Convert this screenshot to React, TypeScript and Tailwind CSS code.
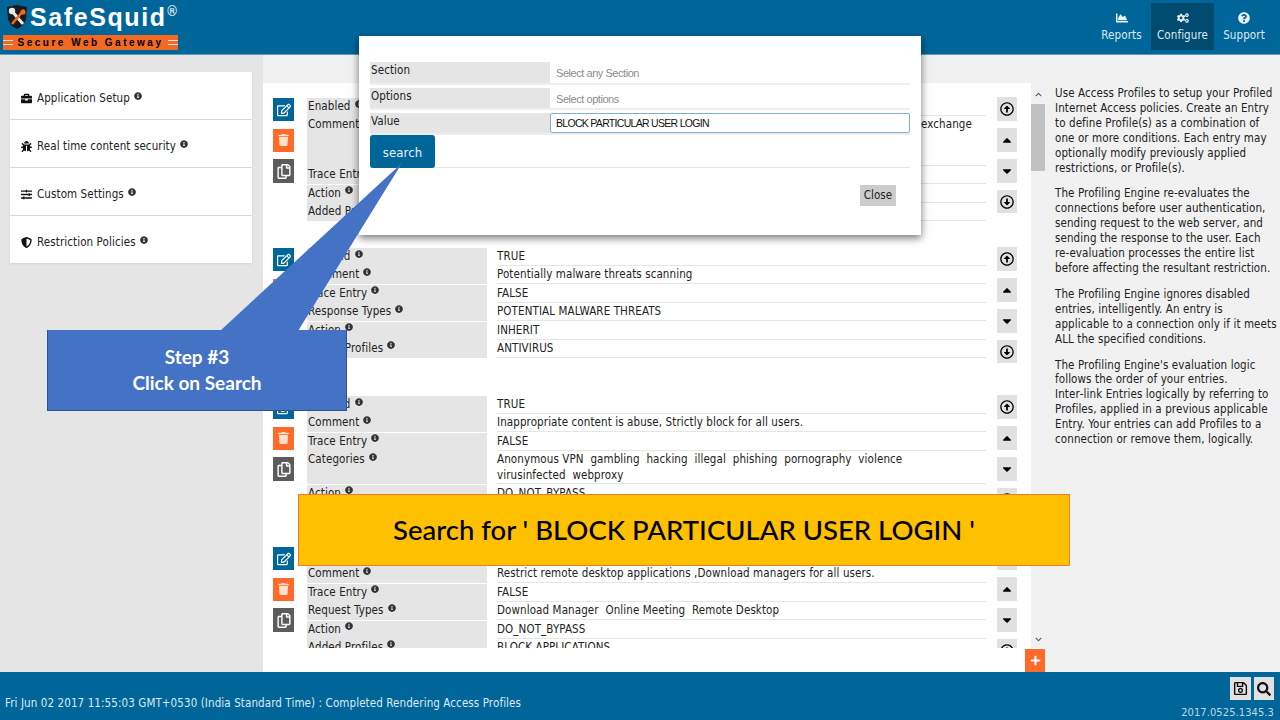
import {
  FaBriefcase,
  FaBug,
  FaSlidersH,
  FaShieldAlt,
  FaInfoCircle,
  FaChartArea,
  FaCogs,
  FaQuestionCircle,
  FaRegEdit,
  FaTrash,
  FaRegCopy,
  FaRegArrowAltCircleUp,
  FaRegArrowAltCircleDown,
  FaCaretUp,
  FaCaretDown,
  FaPlus,
  FaRegSave,
  FaSearch,
  FaChevronUp,
  FaChevronDown,
} from "react-icons/fa";

const sidebarItems = [
  { title: "Application Setup", icon: FaBriefcase },
  { title: "Real time content security", icon: FaBug },
  { title: "Custom Settings", icon: FaSlidersH },
  { title: "Restriction Policies", icon: FaShieldAlt },
];

const entries = [
  {
    height: "h-[150px]",
    rows: [
      { label: "Enabled", value: "TRUE", h: "h-[18px]" },
      { label: "Comment", value: "exchange", h: "h-[49.5px]", pad: "pl-[424px]" },
      { label: "Trace Entry", value: "FALSE", h: "h-[18px]" },
      { label: "Action", value: "INHERIT", h: "h-[18px]" },
      { label: "Added Profiles", value: "FILE SHARING", h: "h-[18px]" },
    ],
  },
  {
    height: "h-[148px]",
    rows: [
      { label: "Enabled", value: "TRUE", h: "h-[18px]" },
      { label: "Comment", value: "Potentially malware threats scanning", h: "h-[18px]" },
      { label: "Trace Entry", value: "FALSE", h: "h-[18px]" },
      { label: "Response Types", value: "POTENTIAL MALWARE THREATS", h: "h-[18px]" },
      { label: "Action", value: "INHERIT", h: "h-[18px]" },
      { label: "Added Profiles", value: "ANTIVIRUS", h: "h-[18px]" },
    ],
  },
  {
    height: "h-[151px]",
    rows: [
      { label: "Enabled", value: "TRUE", h: "h-[18px]" },
      { label: "Comment", value: "Inappropriate content is abuse, Strictly block for all users.", h: "h-[18px]" },
      { label: "Trace Entry", value: "FALSE", h: "h-[18px]" },
      {
        label: "Categories",
        value: "Anonymous VPN\u00a0\u00a0gambling\u00a0\u00a0hacking\u00a0\u00a0illegal\u00a0\u00a0phishing\u00a0\u00a0pornography\u00a0\u00a0violence virusinfected\u00a0\u00a0webproxy",
        h: "h-[33px]",
      },
      { label: "Action", value: "DO_NOT_BYPASS", h: "h-[18px]" },
      { label: "Added Profiles", value: "BLOCK", h: "h-[18px]" },
    ],
  },
  {
    height: "h-[150px]",
    rows: [
      { label: "Enabled", value: "TRUE", h: "h-[18px]" },
      { label: "Comment", value: "Restrict remote desktop applications ,Download managers for all users.", h: "h-[18px]" },
      { label: "Trace Entry", value: "FALSE", h: "h-[18px]" },
      { label: "Request Types", value: "Download Manager\u00a0\u00a0Online Meeting\u00a0\u00a0Remote Desktop", h: "h-[18px]" },
      { label: "Action", value: "DO_NOT_BYPASS", h: "h-[18px]" },
      { label: "Added Profiles", value: "BLOCK APPLICATIONS", h: "h-[18px]" },
    ],
  },
];

// \u2011 keeps the hyphen from breaking, the reference wraps before these words
const helpParagraphs = [
  "Use Access Profiles to setup your Profiled Internet Access policies. Create an Entry to define Profile(s) as a combination of one or more conditions. Each entry may optionally modify previously applied restrictions, or Profile(s).",
  "The Profiling Engine re\u2011evaluates the connections before user authentication, sending request to the web server, and sending the response to the user. Each re\u2011evaluation processes the entire list before affecting the resultant restriction.",
  "The Profiling Engine ignores disabled entries, intelligently. An entry is applicable to a connection only if it meets ALL the specified conditions.",
  "The Profiling Engine's evaluation logic follows the order of your entries. Inter\u2011link Entries logically by referring to Profiles, applied in a previous applicable Entry. Your entries can add Profiles to a connection or remove them, logically.",
];

function Info() {
  return <FaInfoCircle className="inline-block w-[8px] h-[8px] ml-[4px] mb-[6px] text-[#333]" />;
}

function Logo() {
  return (
    <div className="w-[263px] pl-[3px] shrink-0">
      <div className="flex items-start h-[35px] pl-[2px] pt-[4px]">
        <svg viewBox="0 0 24 26" className="w-[24px] h-[26px] shrink-0">
          <path d="M2 3 L12 1 L22 3 L21 15 Q19 22 12 25 Q5 22 3 15 Z" fill="#1b1b1b" />
          <path d="M6 6 L18 20" stroke="#e9e9e9" strokeWidth="3" />
          <path d="M18 20 L6 20 L6 22 Z" fill="#1b1b1b" />
          <path d="M19 6 L7 20" stroke="#f26a21" strokeWidth="2.6" />
          <circle cx="7" cy="7" r="3.2" fill="#e9e9e9" />
          <circle cx="18" cy="8" r="2.6" fill="#f26a21" />
        </svg>
        <span className="ml-[1px] text-white text-[25px] leading-[27px] font-bold tracking-[1.6px] font-['Liberation_Sans',sans-serif]">
          SafeSquid
        </span>
        <span className="text-white text-[14px] leading-[14px] ml-[-1px]">®</span>
      </div>
      <div className="w-[175px] h-[15px] bg-[#f26a21] flex items-center justify-between">
        <span className="w-[10px] h-[5px] border-y border-[#cfe3ef]" />
        <span className="text-black text-[10px] font-bold tracking-[2.5px] leading-none font-['Liberation_Sans',sans-serif]">
          Secure Web Gateway
        </span>
        <span className="w-[10px] h-[5px] border-y border-[#cfe3ef]" />
      </div>
    </div>
  );
}

function NavItem({ icon: Icon, label, active, className }: { icon: typeof FaCogs; label: string; active?: boolean; className: string }) {
  return (
    <div className={`flex flex-col items-center justify-center h-[47px] pt-[1px] ${className} ${active ? "bg-[#014a70]" : ""}`}>
      <Icon className="w-[12px] h-[12px] text-[#e8f1f6]" />
      <span className="leading-[16px] mt-[3px] text-[#dce9f1]">{label}</span>
    </div>
  );
}

function Entry({ entry }: { entry: (typeof entries)[number] }) {
  return (
    <div className={`flex shrink-0 ${entry.height}`}>
      <div className="w-[21px] ml-[10px] shrink-0 flex flex-col gap-[7.5px] pt-[1px]">
        <div className="h-[23px] bg-[#006699] flex items-center justify-center">
          <FaRegEdit className="w-[14px] h-[14px] text-white" />
        </div>
        <div className="h-[23px] bg-[#ff6a2b] flex items-center justify-center">
          <FaTrash className="w-[11px] h-[12px] text-[#ffe3c8]" />
        </div>
        <div className="h-[24px] bg-[#5c5c5c] flex items-center justify-center">
          <FaRegCopy className="w-[14px] h-[15px] text-white" />
        </div>
      </div>
      <div className="w-[679px] ml-[13px] shrink-0 flex flex-col gap-[0.4px] self-start pt-[1px]">
        {entry.rows.map((row) => (
          <div key={row.label} className={`flex ${row.h}`}>
            <div className="w-[180px] bg-[#e5e5e5] shrink-0 pl-[1px] leading-[17px] text-[#222]">
              {row.label}
              <Info />
            </div>
            <div className={`ml-[10px] flex-1 border-b border-[#e5e5e5] leading-[15.5px] pt-[1px] text-[#222] ${row.pad ?? ""}`}>
              {row.value}
            </div>
          </div>
        ))}
      </div>
      <div className="w-[20px] ml-[11px] shrink-0 flex flex-col gap-[7px]">
        <div className="h-[24px] bg-[#e1e1e1] flex items-center justify-center">
          <FaRegArrowAltCircleUp className="w-[14px] h-[14px] text-black" />
        </div>
        <div className="h-[24px] bg-[#e1e1e1] flex items-center justify-center">
          <FaCaretUp className="w-[14px] h-[14px] text-black" />
        </div>
        <div className="h-[24px] bg-[#e1e1e1] flex items-center justify-center">
          <FaCaretDown className="w-[14px] h-[14px] text-black" />
        </div>
        <div className="h-[23px] bg-[#e1e1e1] flex items-center justify-center">
          <FaRegArrowAltCircleDown className="w-[14px] h-[14px] text-black" />
        </div>
      </div>
    </div>
  );
}

function ModalRow({ label, children, className }: { label: string; children: React.ReactNode; className: string }) {
  return (
    <div className={`flex border-b-2 border-[#eeeeee] ${className}`}>
      <div className="w-[180px] bg-[#e5e5e5] shrink-0 pl-[1px] pt-[1px] leading-[15px] text-[#222]">{label}</div>
      {children}
    </div>
  );
}

function SearchModal() {
  return (
    <div className="absolute left-[359px] top-[36px] w-[562px] h-[199px] bg-white shadow-[0_3px_8px_rgba(0,0,0,0.55)] pl-[11px] pr-[11px] pt-[26px]">
      <div className="flex flex-col gap-[3px]">
        <ModalRow label="Section" className="h-[23px]">
          <div className="pl-[6px] pt-[4px] text-[#8c8c8c] text-[11px] leading-[15px] tracking-[-0.45px] font-['Liberation_Sans',sans-serif]">Select any Section</div>
        </ModalRow>
        <ModalRow label="Options" className="h-[22px]">
          <div className="pl-[6px] pt-[4px] text-[#8c8c8c] text-[11px] leading-[15px] tracking-[-0.45px] font-['Liberation_Sans',sans-serif]">Select options</div>
        </ModalRow>
        <ModalRow label="Value" className="h-[22px]">
          <div className="flex-1 h-[20px] border border-[#7fb0cf] rounded-[2px] pl-[5px] text-[10.5px] leading-[18px] text-[#111] tracking-[-0.7px] font-['Liberation_Sans',sans-serif]">
            BLOCK PARTICULAR USER LOGIN
          </div>
        </ModalRow>
      </div>
      <div className="border-b border-[#e5e5e5] h-[33px]">
        <div className="w-[65px] h-[33px] bg-[#006699] rounded-[3px] text-[#e8f1f6] text-[13px] leading-[36px] text-center">
          search
        </div>
      </div>
      <div className="flex justify-end pr-[14px] pt-[17px]">
        <div className="w-[36px] h-[21px] bg-[#cccccc] text-[#222] leading-[21px] text-center">Close</div>
      </div>
    </div>
  );
}

function StepCallout() {
  return (
    <>
      <svg className="absolute left-[210px] top-[160px] w-[200px] h-[175px]" viewBox="0 0 200 175">
        <polygon points="192,3 10,171 88,171" fill="#4472c4" />
      </svg>
      <div className="absolute left-[47px] top-[330px] w-[300px] h-[81px] bg-[#4472c4] border border-[#2f528f] border-t-0 flex flex-col items-center justify-center text-white font-bold text-[19px] leading-[26px] tracking-normal font-['Lato',sans-serif]">
        <span>Step #3</span>
        <span>Click on Search</span>
      </div>
    </>
  );
}

export default function App() {
  return (
    <div className="relative h-screen w-[1280px] flex flex-col overflow-hidden bg-[#f1f1f1] text-[11.5px] tracking-[0.1px] font-['DejaVu_Sans_Condensed','DejaVu_Sans',sans-serif]">
      {/* Header */}
      <header className="h-[55px] shrink-0 bg-[#006699] border-b border-[#5e9cbc] flex">
        <Logo />
        <div className="ml-auto flex items-start pt-[3px] pr-[6px]">
          <NavItem icon={FaChartArea} label="Reports" className="w-[59px]" />
          <NavItem icon={FaCogs} label="Configure" active className="w-[63px]" />
          <NavItem icon={FaQuestionCircle} label="Support" className="w-[60px]" />
        </div>
      </header>

      {/* Main */}
      <div className="flex-1 flex min-h-0">
        <aside className="w-[263px] shrink-0 bg-[#e5e5e5] pl-[10px] pr-[11px] pt-[17px]">
          <div className="flex flex-col gap-[1px]">
            {sidebarItems.map((item) => (
              <div key={item.title} className="h-[47px] bg-white flex items-center pl-[11px] pt-[6px] text-[#222] shadow-[0_1px_2px_rgba(0,0,0,0.08)]">
                <item.icon className="w-[11px] h-[11px] text-[#111] shrink-0" />
                <span className="ml-[5px]">{item.title}</span>
                <Info />
              </div>
            ))}
          </div>
        </aside>

        <main className="w-[782px] shrink-0 flex flex-col pt-[28px]">
          <div className="flex-1 bg-white min-h-0 relative">
            <div className="flex h-[565px]">
              <div className="flex-1 overflow-hidden pt-[14px] flex flex-col">
                {entries.map((entry, i) => (
                  <Entry key={i} entry={entry} />
                ))}
              </div>
              <div className="w-[14px] shrink-0 bg-[#f1f1f1] flex flex-col items-center pt-[8px] pb-[5px]">
                <FaChevronUp className="w-[7px] h-[7px] text-[#555]" />
                <div className="w-full h-[67px] bg-[#c1c1c1] mt-[6px]" />
                <FaChevronDown className="w-[7px] h-[7px] text-[#555] mt-auto" />
              </div>
            </div>
            <div className="absolute right-0 bottom-0 w-[20px] h-[23px] bg-[#ff6a2b] flex items-center justify-center">
              <FaPlus className="w-[11px] h-[11px] text-white" />
            </div>
          </div>
        </main>

        <section className="flex-1 pl-[10px] pr-[2px] pt-[31px] text-[#222] leading-[14.9px] flex flex-col gap-[11px]">
          {helpParagraphs.map((p) => (
            <p key={p.slice(0, 24)}>{p}</p>
          ))}
        </section>
      </div>

      {/* Footer */}
      <footer className="h-[48px] shrink-0 bg-[#006699] flex justify-between pl-[5px] pr-[6px]">
        <div className="text-[#dce9f1] pt-[23px] leading-[16px]">
          Fri Jun 02 2017 11:55:03 GMT+0530 (India Standard Time) : Completed Rendering Access Profiles
        </div>
        <div className="flex flex-col items-end pt-[5px]">
          <div className="flex gap-[3px]">
            <div className="w-[21px] h-[23px] bg-[#e1e1e1] flex items-center justify-center">
              <FaRegSave className="w-[15px] h-[15px] text-[#111]" />
            </div>
            <div className="w-[20px] h-[23px] bg-[#e1e1e1] flex items-center justify-center">
              <FaSearch className="w-[14px] h-[14px] text-[#111]" />
            </div>
          </div>
          <span className="text-[#bcd8e8] text-[11px] leading-[14px] mt-[6px]">2017.0525.1345.3</span>
        </div>
      </footer>

      <SearchModal />
      <StepCallout />
      <div className="absolute left-[298px] top-[494px] w-[772px] h-[72px] bg-[#ffc000] border border-[#ed7d31] flex items-center justify-center text-black text-[27.5px] font-medium tracking-normal font-['Lato',sans-serif]">
        Search for ' BLOCK PARTICULAR USER LOGIN '
      </div>
    </div>
  );
}
